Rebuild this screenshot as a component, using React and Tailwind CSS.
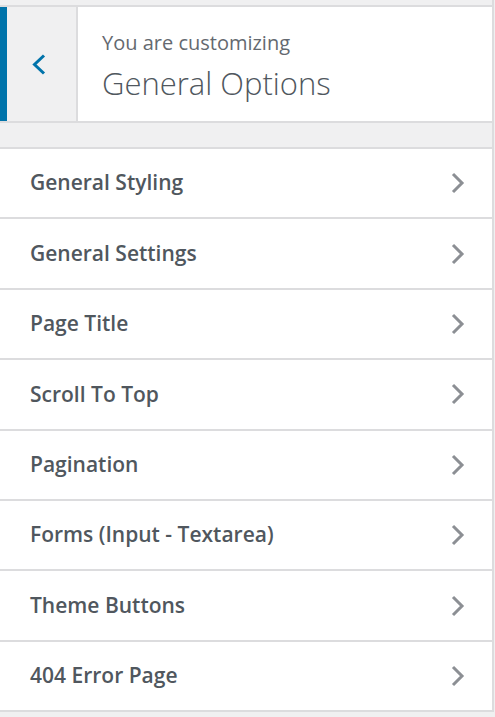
const items = [
  "General Styling",
  "General Settings",
  "Page Title",
  "Scroll To Top",
  "Pagination",
  "Forms (Input - Textarea)",
  "Theme Buttons",
  "404 Error Page",
];

const App = () => {
  return (
    <div
      className="w-[495px] h-[717px] overflow-hidden bg-[#f0f0f1]"
      style={{ fontFamily: '"Open Sans", "Noto Sans", sans-serif' }}
    >
      <div className="w-[494px] border-r-2 border-[#dcdcde]">
        <div className="h-[7px] border-b-2 border-[#dcdcde] bg-[#f0f0f1]" />
        <div className="flex h-[116px] border-b-2 border-[#dcdcde]">
          <button className="flex items-center w-[78px] bg-[#f0f0f1] border-l-[7px] border-[#0073aa] border-r-2 border-r-[#dcdcde] pl-[24px]">
            <svg width="15" height="21" viewBox="0 0 15 21">
              <path
                d="M13 1.5 L3.5 10.5 L13 19.5"
                fill="none"
                stroke="#0073aa"
                strokeWidth="3"
              />
            </svg>
          </button>
          <div className="flex-1 bg-white pl-[24px] pt-[23px]">
            <div className="text-[20px] leading-[26px] text-[#646970]">
              You are customizing
            </div>
            <div className="text-[31px] leading-[42px] font-light text-[#50575e] mt-[6px]">
              General Options
            </div>
          </div>
        </div>
        <div className="h-[26px] border-b-2 border-[#dcdcde]" />
        <ul className="bg-white">
          {items.map((label) => (
            <li
              key={label}
              className="flex items-center justify-between h-[70.4px] border-b-2 border-[#dcdcde] pl-[30px] pr-[26px]"
            >
              <span className="text-[21px] font-semibold text-[#50575e]">
                {label}
              </span>
              <svg width="16" height="22" viewBox="0 0 16 22">
                <path
                  d="M3 2 L12 11 L3 20"
                  fill="none"
                  stroke="#8c8f94"
                  strokeWidth="3"
                />
              </svg>
            </li>
          ))}
        </ul>
      </div>
    </div>
  );
};

export default App;
